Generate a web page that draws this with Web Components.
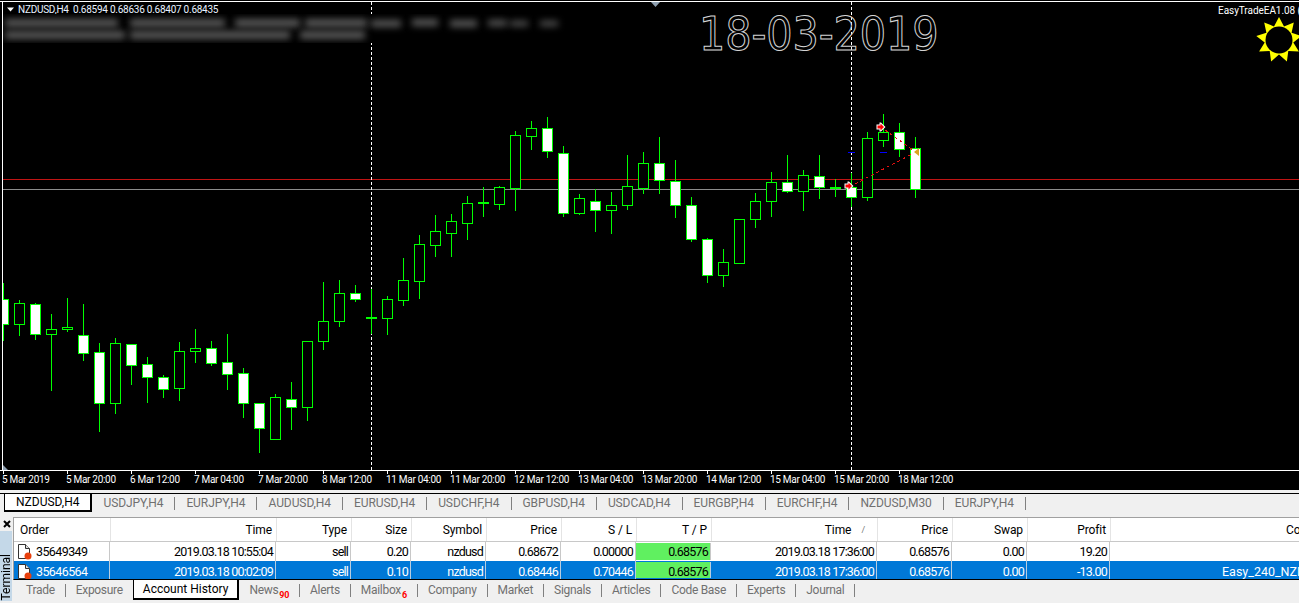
<!DOCTYPE html>
<html>
<head>
<meta charset="utf-8">
<style>
html,body{margin:0;padding:0;width:1299px;height:603px;overflow:hidden;background:#f0f0f0}
body{font-family:Roboto,"Liberation Sans",sans-serif;font-size:12px}
</style>
</head>
<body>
<mt-chart></mt-chart>
<mt-tab-strip style="--pad:11px;--track:-.08px;--active-pad:11px">
  <mt-tab active>NZDUSD,H4</mt-tab><mt-tab>USDJPY,H4</mt-tab><mt-tab>EURJPY,H4</mt-tab><mt-tab>AUDUSD,H4</mt-tab><mt-tab>EURUSD,H4</mt-tab><mt-tab>USDCHF,H4</mt-tab><mt-tab>GBPUSD,H4</mt-tab><mt-tab>USDCAD,H4</mt-tab><mt-tab>EURGBP,H4</mt-tab><mt-tab>EURCHF,H4</mt-tab><mt-tab>NZDUSD,M30</mt-tab><mt-tab>EURJPY,H4</mt-tab>
</mt-tab-strip>
<mt-terminal>
  <mt-row head>
    <mt-cell left>Order</mt-cell><mt-cell>Time</mt-cell><mt-cell>Type</mt-cell><mt-cell>Size</mt-cell><mt-cell>Symbol</mt-cell><mt-cell>Price</mt-cell><mt-cell>S / L</mt-cell><mt-cell>T / P</mt-cell><mt-cell sorted>Time</mt-cell><mt-cell>Price</mt-cell><mt-cell>Swap</mt-cell><mt-cell>Profit</mt-cell><mt-cell>Comment</mt-cell>
  </mt-row>
  <mt-row>
    <mt-cell order>35649349</mt-cell><mt-cell>2019.03.18 10:55:04</mt-cell><mt-cell>sell</mt-cell><mt-cell>0.20</mt-cell><mt-cell>nzdusd</mt-cell><mt-cell>0.68672</mt-cell><mt-cell>0.00000</mt-cell><mt-cell tp>0.68576</mt-cell><mt-cell>2019.03.18 17:36:00</mt-cell><mt-cell>0.68576</mt-cell><mt-cell>0.00</mt-cell><mt-cell>19.20</mt-cell><mt-cell></mt-cell>
  </mt-row>
  <mt-row selected>
    <mt-cell order>35646564</mt-cell><mt-cell>2019.03.18 00:02:09</mt-cell><mt-cell>sell</mt-cell><mt-cell>0.10</mt-cell><mt-cell>nzdusd</mt-cell><mt-cell>0.68446</mt-cell><mt-cell>0.70446</mt-cell><mt-cell tp>0.68576</mt-cell><mt-cell>2019.03.18 17:36:00</mt-cell><mt-cell>0.68576</mt-cell><mt-cell>0.00</mt-cell><mt-cell>-13.00</mt-cell><mt-cell comment>Easy_240_NZDUSD</mt-cell>
  </mt-row>
  <mt-tab-strip slot="tabs" bottom style="--pad:10px;--track:-.3px;--active-pad:9px">
    <mt-tab>Trade</mt-tab><mt-tab>Exposure</mt-tab><mt-tab active>Account History</mt-tab><mt-tab badge="90">News</mt-tab><mt-tab>Alerts</mt-tab><mt-tab badge="6">Mailbox</mt-tab><mt-tab>Company</mt-tab><mt-tab>Market</mt-tab><mt-tab>Signals</mt-tab><mt-tab>Articles</mt-tab><mt-tab>Code Base</mt-tab><mt-tab>Experts</mt-tab><mt-tab>Journal</mt-tab>
  </mt-tab-strip>
</mt-terminal>
<script>
// i = 0 sits at x=3, every bar is 16px further. [wickTop, wickBottom, bodyTop, bodyBottom, white]
const bars = [
  [283,340,299,324,1],[300,335,303,324,0],[303,339,304,334,1],[314,390,329,334,0],[298,331,327,329,0],
  [304,360,335,353,1],[343,431,352,403,1],[338,413,343,403,0],[344,384,344,365,1],[357,402,364,377,1],
  [375,397,377,389,1],[342,400,351,388,0],[329,362,348,351,0],[341,365,348,363,1],[334,389,362,374,1],
  [368,417,373,403,1],[403,452,403,428,1],[394,439,397,439,0],[382,429,399,407,1],[341,420,341,407,0],
  [282,349,321,341,0],[280,326,293,321,0],[285,301,293,299,1],[289,333,317,318,2],[296,334,299,318,0],
  [258,305,280,300,0],[235,298,244,281,0],[215,256,231,245,0],[214,256,221,233,0],[196,239,203,223,0],
  [187,216,202,203,2],[186,209,187,204,0],[131,210,135,188,0],[121,149,128,136,0],[117,157,128,151,1],
  [146,216,153,213,1],[194,214,198,213,0],[189,231,201,210,1],[192,233,205,210,0],[155,209,186,205,0],
  [152,193,163,188,0],[137,193,163,180,1],[160,217,181,205,1],[197,241,205,239,1],[238,282,239,275,1],
  [249,286,262,275,0],[219,263,219,263,0],[193,227,201,219,0],[172,216,182,201,0],[155,192,182,191,1],
  [170,210,175,191,0],[155,198,176,187,1],[179,196,187,188,2],[173,206,187,197,1],[132,200,138,197,0],
  [114,146,132,140,0],[123,156,132,149,1],[137,197,148,189,1]
];

function candlesSvg(){
  let s = '';
  bars.forEach((b,i)=>{
    const x = 3 + 16*i;
    s += `<rect x="${x}" y="${b[0]}" width="1" height="${b[1]-b[0]+1}" fill="#0f0"/>`;
    s += `<rect x="${x-5}" y="${b[2]}" width="11" height="${b[3]-b[2]+1}" fill="#0f0"/>`;
    if(b[4]<2 && b[3]-b[2]>1) s += `<rect x="${x-4}" y="${b[2]+1}" width="9" height="${b[3]-b[2]-1}" fill="${b[4]?'#fff':'#000'}"/>`;
  });
  return s;
}

function sunPoints(){
  const pts = [];
  for(let i=0;i<18;i++){
    const a = i*Math.PI/9 - Math.PI/2, r = i%2 ? 14.5 : 23;
    pts.push((1279+r*Math.cos(a)).toFixed(1)+','+(40+r*Math.sin(a)).toFixed(1));
  }
  return pts.join(' ');
}

const axisLabels = ['5 Mar 2019','5 Mar 20:00','6 Mar 12:00','7 Mar 04:00','7 Mar 20:00','8 Mar 12:00','11 Mar 04:00','11 Mar 20:00','12 Mar 12:00','13 Mar 04:00','13 Mar 20:00','14 Mar 12:00','15 Mar 04:00','15 Mar 20:00','18 Mar 12:00'];

class MtChart extends HTMLElement {
  constructor(){
    super();
    this.attachShadow({mode:'open'});
  }
  connectedCallback(){
    this.shadowRoot.innerHTML = `
    <style>
    :host{display:flex;flex-direction:column;height:490px;background:#000;color:#fff;font-family:Roboto,"Liberation Sans",sans-serif}
    .plot{position:relative;height:470px;overflow:hidden}
    svg{position:absolute;left:0;top:0}
    .title{position:absolute;left:18px;top:3px;font-size:10px;letter-spacing:-.25px;line-height:13px;white-space:pre;color:#e8f2ff}
    .ea{position:absolute;left:1218px;top:4px;font-size:10px;letter-spacing:-.05px;line-height:13px;white-space:pre}
    .date{position:absolute;left:699px;top:7px;font:46px/54px "DejaVu Sans Condensed","DejaVu Sans",sans-serif;letter-spacing:-.1px;color:transparent;-webkit-text-stroke:1px #d4d4d4}
    .blur{position:absolute;left:3px;top:14px;width:565px;height:29px;background:#000;overflow:hidden}
    .blur i{position:absolute;background:#5a5a5a;filter:blur(3.5px)}
    .axis{display:flex;height:19px;border-top:1px solid #fff;padding-left:2px;overflow:hidden}
    .axis span{flex:0 0 64px;font-size:10px;letter-spacing:-.3px;line-height:17px;white-space:nowrap;position:relative}
    .axis span::before{content:"";position:absolute;left:1px;top:0;width:1px;height:3px;background:#fff}
    </style>
    <div class="plot">
      <svg width="1299" height="470" shape-rendering="crispEdges">
        <rect x="0" y="1" width="1299" height="1" fill="#fff"/>
        <rect x="3" y="179" width="1296" height="1" fill="#c01414"/>
        <rect x="3" y="189" width="1296" height="1" fill="#8c8c8c"/>
        <line x1="371.5" y1="2" x2="371.5" y2="470" stroke="#fff" stroke-dasharray="3 2"/>
        <line x1="851.5" y1="2" x2="851.5" y2="470" stroke="#fff" stroke-dasharray="3 2"/>
        ${candlesSvg()}
        <rect x="0" y="2" width="2" height="468" fill="#000"/>
        <rect x="2" y="1" width="1" height="469" fill="#fff"/>
        <rect x="848" y="152" width="7" height="1" fill="#00f"/>
        <rect x="880" y="152" width="7" height="1" fill="#00f"/>
        <line x1="855" y1="184" x2="912" y2="154" stroke="#e01010" stroke-dasharray="3 3"/>
        <line x1="885" y1="130" x2="913" y2="150" stroke="#e01010" stroke-dasharray="3 3"/>
        <g shape-rendering="auto">
          <path d="M3 465l5 5h-5z" fill="#8fa0b0"/>
          <path d="M651 2h9l-4.500 5z" fill="#8fa0b0"/>
          <path d="M7 7.500h7l-3.500 4z" fill="#fff"/>
          <g>
            <path d="M844.500 183.500h3v-2h1.500l4.500 4.500-4.500 4.500h-1.500v-2h-3z" fill="#fff"/>
            <path d="M845.500 184.500h3v-2l3.500 3.500-3.500 3.500v-2h-3z" fill="#f00"/>
          </g>
          <g transform="translate(32 -59)">
            <path d="M844.500 183.500h3v-2h1.500l4.500 4.500-4.500 4.500h-1.500v-2h-3z" fill="#fff"/>
            <path d="M845.500 184.500h3v-2l3.500 3.500-3.500 3.500v-2h-3z" fill="#f00"/>
          </g>
          <path d="M919 148v8l-5-4z" fill="#daa520"/>
          <polygon points="${sunPoints()}" fill="#ff0"/>
          <circle cx="1279" cy="40" r="13.500" fill="#000"/>
        </g>
      </svg>
      <div class="date">18-03-2019</div>
      <div class="title">NZDUSD,H4  0.68594 0.68636 0.68407 0.68435</div>
      <div class="ea">EasyTradeEA1.08 (</div>
      <div class="blur">
        <i style="left:2px;top:5px;width:113px;height:8px"></i><i style="left:127px;top:5px;width:95px;height:8px"></i><i style="left:232px;top:5px;width:65px;height:8px"></i><i style="left:302px;top:5px;width:62px;height:8px"></i><i style="left:368px;top:6px;width:30px;height:7px"></i><i style="left:409px;top:5px;width:26px;height:7px"></i><i style="left:447px;top:6px;width:27px;height:7px"></i><i style="left:485px;top:6px;width:19px;height:6px"></i><i style="left:507px;top:7px;width:18px;height:5px"></i><i style="left:537px;top:7px;width:18px;height:5px"></i>
        <i style="left:2px;top:17px;width:120px;height:8px"></i><i style="left:127px;top:17px;width:160px;height:8px"></i><i style="left:297px;top:17px;width:65px;height:8px"></i>
      </div>
    </div>
    <div class="axis">${axisLabels.map(t=>`<span>${t}</span>`).join('')}</div>`;
  }
}

class MtTabStrip extends HTMLElement {
  constructor(){
    super();
    this.attachShadow({mode:'open'});
  }
  connectedCallback(){
    this.shadowRoot.innerHTML = `
    <style>
    :host{display:flex;align-items:stretch;height:18px;margin-top:3px;border-top:1px solid #000;padding:0 0 5px 5px;background:#f0f0f0}
    :host([bottom]){height:20px;margin-top:0;border-top:0;padding:0 0 0 3px;flex:0 0 auto}
    </style>
    <slot></slot>`;
  }
}

class MtTab extends HTMLElement {
  constructor(){
    super();
    this.attachShadow({mode:'open'});
  }
  connectedCallback(){
    const badge = this.getAttribute('badge');
    this.shadowRoot.innerHTML = `
    <style>
    :host{display:flex;align-items:center;font-size:12px;letter-spacing:var(--track);color:#707070;position:relative}
    .in{display:block;line-height:13px;padding:0 var(--pad);border-right:1px solid #808080;white-space:nowrap}
    :host([active]){background:#fff;color:#000;border:solid #000;border-width:0 2px 2px 1px;box-sizing:border-box;margin-left:-1px;letter-spacing:0}
    :host([active]) .in{border-right:0;padding:0 var(--active-pad)}
    b{font:bold 9px/9px Roboto,sans-serif;color:#f00;position:relative;top:4px;margin-left:1px}
    </style>
    <span class="in"><slot></slot>${badge?`<b>${badge}</b>`:''}</span>`;
  }
}

class MtTerminal extends HTMLElement {
  constructor(){
    super();
    this.attachShadow({mode:'open'});
  }
  connectedCallback(){
    this.shadowRoot.innerHTML = `
    <style>
    :host{display:flex;height:86px;margin-top:0;background:#f0f0f0}
    .rail{flex:0 0 13px;display:flex;flex-direction:column;height:84px}
    .close{height:14px;display:flex;align-items:center;justify-content:center}
    .bar{flex:1;background:#c4d8e8;display:flex;align-items:flex-end;justify-content:center;width:12px}
    .bar span{writing-mode:vertical-rl;transform:rotate(180deg);font-size:12px;line-height:12px;color:#000}
    .main{flex:1;min-width:0;display:flex;flex-direction:column}
    .table{height:61px;background:#fff;border-top:1px solid #a0a0a0;border-left:1px solid #a0a0a0;border-bottom:1px solid #000;overflow:hidden;width:1400px}
    </style>
    <div class="rail">
      <div class="close"><svg width="8" height="8"><path d="M1 1l6 6M7 1l-6 6" stroke="#000" stroke-width="2"/></svg></div>
      <div class="bar"><span>Terminal</span></div>
    </div>
    <div class="main">
      <div class="table"><slot></slot></div>
      <slot name="tabs"></slot>
    </div>`;
  }
}

class MtRow extends HTMLElement {
  constructor(){
    super();
    this.attachShadow({mode:'open'});
  }
  connectedCallback(){
    this.shadowRoot.innerHTML = `
    <style>
    :host{display:grid;grid-template-columns:96px 166px 75px 60px 75px 75px 75px 75px 166px 75px 75px 83px 232px;height:19px;width:1340px;background:#fff;color:#000}
    :host([head]){grid-template-columns:97px 166px 75px 60px 75px 75px 75px 75px 166px 75px 75px 83px 232px;height:23px;border-bottom:1px solid #c8c8c8}
    :host([selected]){background:#0078d7;color:#fff;height:18px}
    </style>
    <slot></slot>`;
  }
}

class MtCell extends HTMLElement {
  constructor(){
    super();
    this.attachShadow({mode:'open'});
  }
  connectedCallback(){
    const icon = this.hasAttribute('order') ? `<svg width="16" height="17" viewBox="0 0 16 17" style="flex:none"><path d="M1.500 1.500h7l4 4v10h-11z" fill="#fff" stroke="#333"/><path d="M8.500 1.500v4h4" fill="#ddd" stroke="#333"/><circle cx="11" cy="13" r="3.500" fill="#e8400c"/></svg>` : '';
    const mark = this.hasAttribute('sorted') ? `<em>/</em>` : '';
    this.shadowRoot.innerHTML = `
    <style>
    :host{display:flex;align-items:center;justify-content:flex-end;box-sizing:border-box;padding-right:2px;border-right:1px solid #c8c8c8;font-size:12.5px;letter-spacing:-.8px;white-space:nowrap;overflow:hidden}
    :host-context([head]){padding-right:4px;border-right-color:#e4e4e4;letter-spacing:-.1px;font-size:12px}
    :host-context([selected]){border-right-color:#b8cde0;padding-top:2px}
    :host([left]){justify-content:flex-start;padding-left:6px}
    :host([order]){justify-content:flex-start;padding-left:3px;gap:3px;letter-spacing:-.6px}
    :host([comment]){justify-content:flex-start;padding-left:112px;letter-spacing:0}
    :host([tp]){background:#60f060;color:#000;margin:1px 0}
    em{font:normal 9px Roboto,sans-serif;color:#777;margin:0 8px 0 10px}
    </style>
    ${icon}<slot></slot>${mark}`;
  }
}

customElements.define('mt-chart', MtChart);
customElements.define('mt-tab-strip', MtTabStrip);
customElements.define('mt-tab', MtTab);
customElements.define('mt-terminal', MtTerminal);
customElements.define('mt-row', MtRow);
customElements.define('mt-cell', MtCell);
</script>
</body>
</html>
